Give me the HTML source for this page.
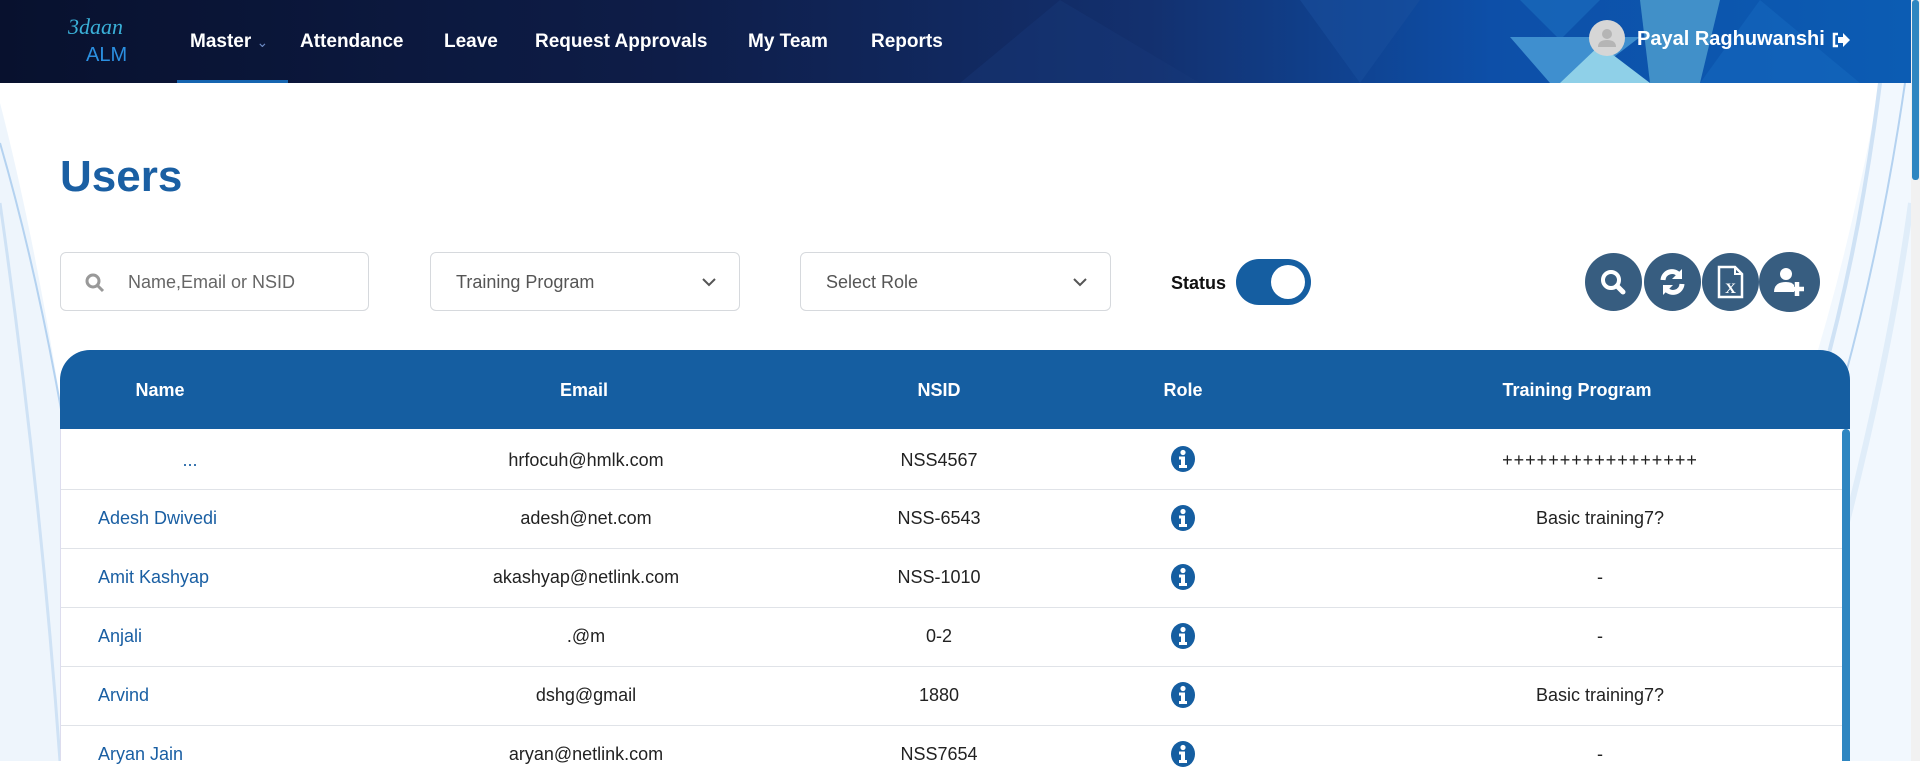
<!DOCTYPE html>
<html><head><meta charset="utf-8"><style>
*{margin:0;padding:0;box-sizing:border-box}
body{width:1920px;height:761px;overflow:hidden;position:relative;font-family:"Liberation Sans",sans-serif;background:#fff}
.bg{position:absolute;left:0;top:83px;width:1911px;height:678px;overflow:hidden}
.hdr{position:absolute;left:0;top:0;width:1911px;height:83px;background:linear-gradient(90deg,#08112e 0%,#0e1d48 35%,#13306e 60%,#0d4fa8 78%,#0c5cb3 100%);overflow:hidden}
.nav{position:absolute;top:31px;color:#fff;font-weight:bold;font-size:19px}
.cell{position:absolute;font-size:18px;color:#222;text-align:center;transform:translateX(-50%);white-space:nowrap}
.nm{position:absolute;left:98px;font-size:18px;color:#1a5fa3}
.line{position:absolute;left:61px;width:1781px;height:1px;background:#e0e3e8}
.inp{position:absolute;top:252px;height:59px;background:#fff;border:1px solid #d6d9dd;border-radius:6px;font-size:18px;color:#555}
.btn{position:absolute;top:253px;width:57px;height:58px;border-radius:50%;background:#375d80}
.info{position:absolute;left:1183px;transform:translateX(-50%);width:26px;height:28px}
</style></head><body>
<div class="bg">
<svg width="1911" height="678" style="position:absolute;left:0;top:0">
<path d="M0 20 Q60 250 110 678 L0 678Z" fill="#eef5fc"/>
<path d="M0 60 Q70 300 110 678" stroke="#b4d2f0" stroke-width="2" fill="none"/>
<path d="M0 120 Q40 400 60 678" stroke="#cfe2f5" stroke-width="3" fill="none"/>
<path d="M1911 0 L1911 678 L1620 678 Q1800 450 1880 0Z" fill="#f2f8fe"/>
<path d="M1700 678 Q1850 380 1905 0" stroke="#b4d2f0" stroke-width="2" fill="none"/>
<path d="M1660 678 Q1830 400 1880 0" stroke="#cfe2f5" stroke-width="4" fill="none"/>
<path d="M1780 678 Q1880 350 1911 120" stroke="#e0edf9" stroke-width="6" fill="none"/>
</svg>
</div>
<div class="hdr">
<svg width="1911" height="83" style="position:absolute;left:0;top:0">
<polygon points="1520,0 1600,0 1560,40" fill="#1c6fbf" opacity=".6"/>
<polygon points="1510,37 1640,37 1580,83 1550,83" fill="#3f8fcf"/>
<polygon points="1600,45 1650,83 1560,83" fill="#8fd0e8"/>
<polygon points="1640,0 1720,0 1700,83 1650,83" fill="#4f9fd0" opacity=".8"/>
<polygon points="1300,0 1420,0 1360,83" fill="#1a4f9e" opacity=".5"/>
<polygon points="1060,0 1200,83 960,83" fill="#1a3a7a" opacity=".4"/>
<polygon points="1760,0 1860,83 1700,83" fill="#1669bf" opacity=".5"/>
</svg>
<div style="position:absolute;left:68px;top:14px;color:#3ab0d8;font-size:22px;font-style:italic;font-family:'Liberation Serif',serif">3daan</div>
<div style="position:absolute;left:86px;top:44px;color:#2b8fe0;font-size:20px">ALM</div>
<div class="nav" style="left:190px">Master <span style="font-weight:normal;color:#6c8bc4;font-size:14px">&#8964;</span></div>
<div style="position:absolute;left:177px;top:80px;width:111px;height:3px;background:#1665b0"></div>
<div class="nav" style="left:300px">Attendance</div>
<div class="nav" style="left:444px">Leave</div>
<div class="nav" style="left:535px">Request Approvals</div>
<div class="nav" style="left:748px">My Team</div>
<div class="nav" style="left:871px">Reports</div>
<div style="position:absolute;left:1589px;top:20px;width:36px;height:36px;border-radius:50%;background:#d6d6d6">
<svg width="36" height="36"><circle cx="18" cy="14" r="5" fill="#b5b5b5"/><path d="M9 27 Q9 20 18 20 Q27 20 27 27Z" fill="#b5b5b5"/></svg></div>
<div class="nav" style="left:1637px;top:28px;font-size:20px">Payal Raghuwanshi</div>
<svg style="position:absolute;left:1831px;top:32px" width="20" height="16"><path d="M7 2 H3 V14 H7" stroke="#fff" stroke-width="2.5" fill="none"/><path d="M7 5 H12 V1 L19 8 L12 15 V11 H7Z" fill="#fff"/></svg>
</div>
<div style="position:absolute;left:1911px;top:0;width:9px;height:761px;background:#f1f1f1"><div style="width:7px;margin-left:1px;height:180px;background:#2e86c1;border-radius:3px"></div></div>

<div style="position:absolute;left:60px;top:152px;font-size:44px;color:#1a5fa3;font-weight:bold">Users</div>

<div class="inp" style="left:60px;width:309px">
<svg style="position:absolute;left:24px;top:20px" width="20" height="20"><circle cx="8" cy="8" r="6" stroke="#999" stroke-width="3" fill="none"/><path d="M12.5 12.5 L18 18" stroke="#999" stroke-width="3"/></svg>
<span style="position:absolute;left:67px;top:19px;color:#666">Name,Email or NSID</span></div>
<div class="inp" style="left:430px;width:310px"><span style="position:absolute;left:25px;top:19px">Training Program</span>
<svg style="position:absolute;left:270px;top:24px" width="16" height="10"><path d="M2 2 L8 8 L14 2" stroke="#555" stroke-width="2" fill="none"/></svg></div>
<div class="inp" style="left:800px;width:311px"><span style="position:absolute;left:25px;top:19px">Select Role</span>
<svg style="position:absolute;left:271px;top:24px" width="16" height="10"><path d="M2 2 L8 8 L14 2" stroke="#555" stroke-width="2" fill="none"/></svg></div>
<div style="position:absolute;left:1171px;top:273px;font-size:18px;font-weight:bold;color:#111">Status</div>
<div style="position:absolute;left:1236px;top:259px;width:75px;height:46px;border-radius:23px;background:#155ea1"><div style="position:absolute;right:6px;top:6px;width:34px;height:34px;border-radius:50%;background:#fff"></div></div>

<div class="btn" style="left:1585px"><svg width="57" height="58"><circle cx="26" cy="27" r="8" stroke="#fff" stroke-width="4" fill="none"/><path d="M32 33 L38 39" stroke="#fff" stroke-width="5" stroke-linecap="round"/></svg></div>
<div class="btn" style="left:1644px"><svg width="57" height="58"><path d="M19 27 A9 9 0 0 1 35 22" stroke="#fff" stroke-width="5" fill="none"/><path d="M38 16 V26 H28Z" fill="#fff"/><path d="M38 31 A9 9 0 0 1 22 36" stroke="#fff" stroke-width="5" fill="none"/><path d="M19 42 V32 H29Z" fill="#fff"/></svg></div>
<div class="btn" style="left:1702px"><svg width="57" height="58"><path d="M17 14 H33 L40 21 V44 H17Z" stroke="#fff" stroke-width="2.5" fill="none"/><path d="M33 14 V21 H40" stroke="#fff" stroke-width="2" fill="none"/><text x="28.5" y="40" fill="#fff" font-size="15" font-family="Liberation Serif" font-weight="bold" text-anchor="middle">X</text></svg></div>
<div class="btn" style="left:1759px;width:61px;height:60px;top:252px"><svg width="61" height="60"><circle cx="27" cy="22" r="6" fill="#fff"/><path d="M15 40 Q15 30 27 30 Q33 30 35 33 V40Z" fill="#fff"/><path d="M38 30 V44 M31 37 H45" stroke="#fff" stroke-width="4.5"/></svg></div>

<div style="position:absolute;left:60px;top:350px;width:1790px;height:79px;background:#155ea1;border-radius:30px 30px 0 0"></div>
<div style="position:absolute;left:60px;top:429px;width:1782px;height:332px;background:#fff;border-left:1px solid #dde"></div>
<div style="position:absolute;left:1842px;top:429px;width:8px;height:332px;background:#2e86c1;border-radius:4px 4px 0 0"></div>
<div class="cell" style="left:160px;top:380px;color:#fff;font-weight:bold">Name</div>
<div class="cell" style="left:584px;top:380px;color:#fff;font-weight:bold">Email</div>
<div class="cell" style="left:939px;top:380px;color:#fff;font-weight:bold">NSID</div>
<div class="cell" style="left:1183px;top:380px;color:#fff;font-weight:bold">Role</div>
<div class="cell" style="left:1577px;top:380px;color:#fff;font-weight:bold">Training Program</div>

<div class="line" style="top:489px"></div><div class="line" style="top:548px"></div><div class="line" style="top:607px"></div><div class="line" style="top:666px"></div><div class="line" style="top:725px"></div>

<div class="cell" style="left:190px;top:450px;color:#1a5fa3">...</div>
<div class="nm" style="top:508px">Adesh Dwivedi</div>
<div class="nm" style="top:567px">Amit Kashyap</div>
<div class="nm" style="top:626px">Anjali</div>
<div class="nm" style="top:685px">Arvind</div>
<div class="nm" style="top:744px">Aryan Jain</div>

<div class="cell" style="left:586px;top:450px">hrfocuh@hmlk.com</div>
<div class="cell" style="left:586px;top:508px">adesh@net.com</div>
<div class="cell" style="left:586px;top:567px">akashyap@netlink.com</div>
<div class="cell" style="left:586px;top:626px">.@m</div>
<div class="cell" style="left:586px;top:685px">dshg@gmail</div>
<div class="cell" style="left:586px;top:744px">aryan@netlink.com</div>

<div class="cell" style="left:939px;top:450px">NSS4567</div>
<div class="cell" style="left:939px;top:508px">NSS-6543</div>
<div class="cell" style="left:939px;top:567px">NSS-1010</div>
<div class="cell" style="left:939px;top:626px">0-2</div>
<div class="cell" style="left:939px;top:685px">1880</div>
<div class="cell" style="left:939px;top:744px">NSS7654</div>

<div class="cell" style="left:1600px;top:450px;letter-spacing:1px">+++++++++++++++++</div>
<div class="cell" style="left:1600px;top:508px">Basic training7?</div>
<div class="cell" style="left:1600px;top:567px">-</div>
<div class="cell" style="left:1600px;top:626px">-</div>
<div class="cell" style="left:1600px;top:685px">Basic training7?</div>
<div class="cell" style="left:1600px;top:744px">-</div>

<svg class="info" style="top:445px" viewBox="0 0 26 28"><ellipse cx="13" cy="14" rx="12" ry="13" fill="#155ea1"/><circle cx="13" cy="7.5" r="2.6" fill="#fff"/><path d="M9 11.5 H15 V20 H17 V23 H9 V20 H11 V14.5 H9Z" fill="#fff"/></svg>
<svg class="info" style="top:504px" viewBox="0 0 26 28"><ellipse cx="13" cy="14" rx="12" ry="13" fill="#155ea1"/><circle cx="13" cy="7.5" r="2.6" fill="#fff"/><path d="M9 11.5 H15 V20 H17 V23 H9 V20 H11 V14.5 H9Z" fill="#fff"/></svg>
<svg class="info" style="top:563px" viewBox="0 0 26 28"><ellipse cx="13" cy="14" rx="12" ry="13" fill="#155ea1"/><circle cx="13" cy="7.5" r="2.6" fill="#fff"/><path d="M9 11.5 H15 V20 H17 V23 H9 V20 H11 V14.5 H9Z" fill="#fff"/></svg>
<svg class="info" style="top:622px" viewBox="0 0 26 28"><ellipse cx="13" cy="14" rx="12" ry="13" fill="#155ea1"/><circle cx="13" cy="7.5" r="2.6" fill="#fff"/><path d="M9 11.5 H15 V20 H17 V23 H9 V20 H11 V14.5 H9Z" fill="#fff"/></svg>
<svg class="info" style="top:681px" viewBox="0 0 26 28"><ellipse cx="13" cy="14" rx="12" ry="13" fill="#155ea1"/><circle cx="13" cy="7.5" r="2.6" fill="#fff"/><path d="M9 11.5 H15 V20 H17 V23 H9 V20 H11 V14.5 H9Z" fill="#fff"/></svg>
<svg class="info" style="top:740px" viewBox="0 0 26 28"><ellipse cx="13" cy="14" rx="12" ry="13" fill="#155ea1"/><circle cx="13" cy="7.5" r="2.6" fill="#fff"/><path d="M9 11.5 H15 V20 H17 V23 H9 V20 H11 V14.5 H9Z" fill="#fff"/></svg>
</body></html>
